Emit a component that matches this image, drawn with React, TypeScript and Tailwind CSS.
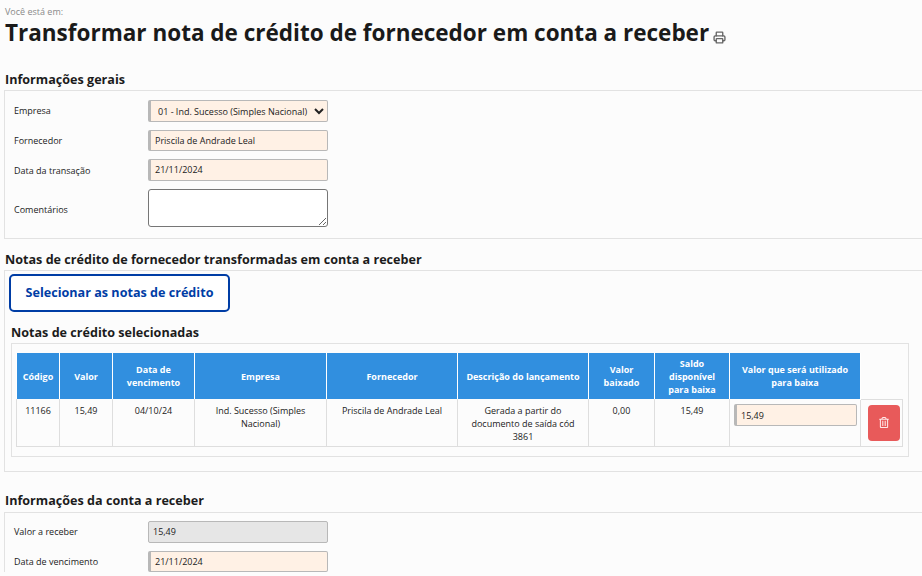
import type { ReactNode } from "react";
import { Printer } from "lucide-react";
import { FaRegTrashAlt } from "react-icons/fa";

const font = "font-['Open_Sans',sans-serif]";

function Row({ label, h, mb, labelPad, children }: { label: string; h: string; mb: string; labelPad?: string; children: ReactNode }) {
  return (
    <div className={`flex items-center ${h} ${mb}`}>
      <label className={`w-[134px] text-[9px] leading-[14px] text-[#222] ${labelPad ?? ""}`}>{label}</label>
      {children}
    </div>
  );
}

function Field({ value, grey }: { value: string; grey?: boolean }) {
  return (
    <div
      className={
        grey
          ? "flex h-full w-[180px] items-center rounded-[2px] border border-[#b8b8b8] bg-[#e6e6e6] pl-1 text-[9px] text-[#222]"
          : "flex h-full w-[180px] items-center rounded-[2px] border border-l-[3px] border-[#b8b8b8] bg-[#fff1e5] pl-1 text-[9px] text-[#222]"
      }
    >
      {value}
    </div>
  );
}

const headers = [
  ["Código", "w-[43px]"],
  ["Valor", "w-[53px]"],
  ["Data de vencimento", "w-[82px]"],
  ["Empresa", "w-[132px]"],
  ["Fornecedor", "w-[131px]"],
  ["Descrição do lançamento", "w-[131px]"],
  ["Valor baixado", "w-[66px]"],
  ["Saldo disponível para baixa", "w-[75px]"],
  ["Valor que será utilizado para baixa", "w-[131px]"],
];

const cells = [
  "11166",
  "15,49",
  "04/10/24",
  "Ind. Sucesso (Simples Nacional)",
  "Priscila de Andrade Leal",
  "Gerada a partir do documento de saída cód 3861",
  "0,00",
  "15,49",
];

export default function App() {
  return (
    <div className={`${font} h-[576px] w-[922px] overflow-hidden bg-[#fcfcfc] pl-1 text-[#1c1c1c]`}>
      <p className="pt-[6px] pl-px text-[9px] leading-[12px] text-[#8a8a8a]">Você está em:</p>
      <h1 className="mt-px flex h-[28px] items-center pl-px text-[22.5px] font-bold leading-[28px] text-[#1a1a1a]">
        Transformar nota de crédito de fornecedor em conta a receber
        <Printer className="ml-1 mt-2 h-[13px] w-[13px] text-[#666]" strokeWidth={2.5} />
      </h1>

      <h2 className="mb-[2px] mt-[23px] h-[18px] pl-px text-[12.6px] font-bold leading-[20px]">Informações gerais</h2>
      <section className="h-[149px] w-[922px] border border-r-0 border-[#e2e2e2] pl-[9px] pt-[9px]">
        <Row label="Empresa" h="h-[22px]" mb="mb-2">
          <select className="h-[22px] w-[180px] rounded-[2px] border border-l-[3px] border-[#b8b8b8] bg-[#fff1e5] pl-[3px] text-[9px] text-[#222]">
            <option>01 - Ind. Sucesso (Simples Nacional)</option>
          </select>
        </Row>
        <Row label="Fornecedor" h="h-[21px]" mb="mb-2">
          <Field value="Priscila de Andrade Leal" />
        </Row>
        <Row label="Data da transação" h="h-[22px]" mb="mb-2" labelPad="pt-px">
          <Field value="21/11/2024" />
        </Row>
        <Row label="Comentários" h="h-[38px]" mb="mb-0" labelPad="pt-[3px]">
          <textarea className="h-[38px] w-[180px] rounded-[3px] border border-[#767676] bg-white" />
        </Row>
      </section>

      <h2 className="mb-[2px] mt-[11px] h-[18px] pl-px text-[12.6px] font-bold leading-[20px]">
        Notas de crédito de fornecedor transformadas em conta a receber
      </h2>
      <section className="h-[202px] w-[922px] border border-r-0 border-[#e2e2e2] pl-1 pt-[3px]">
        <button className="h-[38px] w-[221px] rounded-[5px] border-2 border-[#003da5] bg-white text-[12.6px] font-bold text-[#003da5]">
          Selecionar as notas de crédito
        </button>
        <h3 className="mb-[2px] mt-[11px] h-[18px] pl-[2px] text-[12.6px] font-bold leading-[20px]">
          Notas de crédito selecionadas
        </h3>
        <div className="ml-[2px] h-[114px] w-[898px] border border-[#e2e2e2] pl-1 pt-[9px]">
          <table className="w-[886px] table-fixed border-collapse text-center text-[9px] leading-[13px]">
            <thead>
              <tr className="h-[46px]">
                {headers.map(([h, w]) => (
                  <th key={h} className={`${w} border-x border-white bg-[#318fdf] px-1 font-bold text-white`}>
                    {h}
                  </th>
                ))}
                <th className="w-[42px]" />
              </tr>
            </thead>
            <tbody>
              <tr className="h-[47px] border-b border-[#dedede]">
                {cells.map((c, i) => (
                  <td key={i} className="border-x border-[#dedede] px-2 pt-[5px] align-top text-[#222]">
                    {c}
                  </td>
                ))}
                <td className="border-x border-[#dedede] p-0 pl-1 pt-[5px] align-top">
                  <div className="flex h-[22px] w-[123px] items-center rounded-[2px] border border-l-[3px] border-[#b8b8b8] bg-[#fff1e5] pl-1 text-left text-[9px]">
                    15,49
                  </div>
                </td>
                <td className="border border-[#dedede] p-0 pl-[7px] align-middle">
                  <button className="flex h-9 w-8 items-center justify-center rounded-[4px] bg-[#e85a5a]">
                    <FaRegTrashAlt className="h-[11px] w-[10px] text-[#ffe9e9]" />
                  </button>
                </td>
              </tr>
            </tbody>
          </table>
        </div>
      </section>

      <h2 className="mb-[3px] mt-[19px] h-[18px] pl-px text-[12.6px] font-bold leading-[20px]">
        Informações da conta a receber
      </h2>
      <section className="w-[922px] border-l border-t border-[#e2e2e2] pl-[9px] pt-2">
        <Row label="Valor a receber" h="h-[22px]" mb="mb-2">
          <Field value="15,49" grey />
        </Row>
        <Row label="Data de vencimento" h="h-[21px]" mb="mb-0">
          <Field value="21/11/2024" />
        </Row>
      </section>
    </div>
  );
}
